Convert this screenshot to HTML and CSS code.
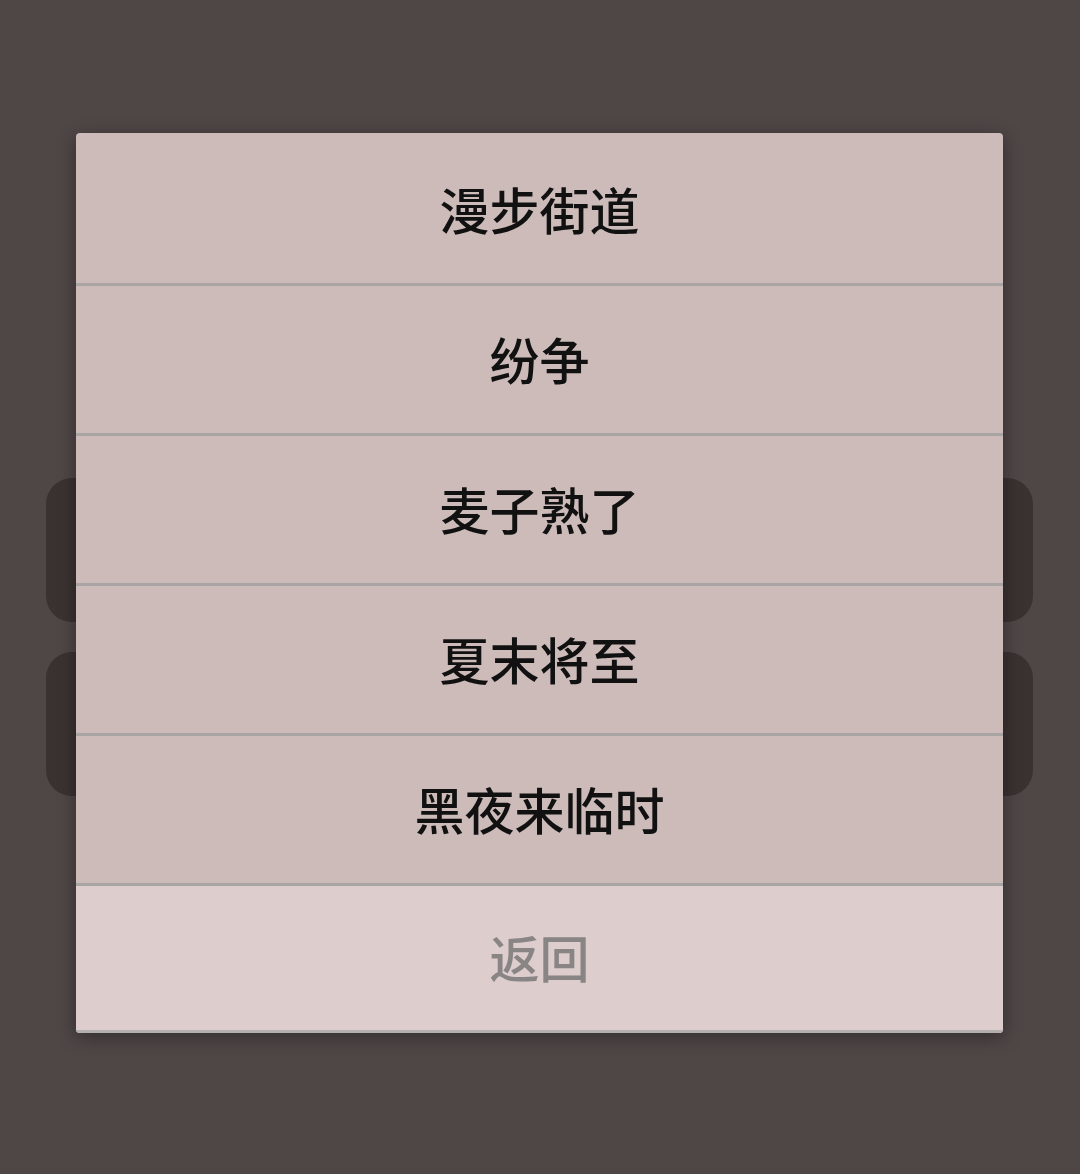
FILE: index.html
```html
<!DOCTYPE html>
<html lang="zh">
<head>
<meta charset="utf-8">
<link rel="stylesheet" href="styles.css">
</head>
<body>
<div class="page">
  <div class="bg-card"></div>
  <div class="bg-card"></div>
</div>
<div class="dialog">
  <div class="item">漫步街道</div>
  <div class="item">纷争</div>
  <div class="item">麦子熟了</div>
  <div class="item">夏末将至</div>
  <div class="item">黑夜来临时</div>
  <div class="item back">返回</div>
</div>
</body>
</html>
```
FILE: styles.css
```css
html, body {
  margin: 0;
  padding: 0;
}
body {
  width: 1080px;
  height: 1174px;
  background: #4f4646;
  font-family: "Noto Sans CJK SC", "Noto Sans", sans-serif;
  position: relative;
  overflow: hidden;
}
.page {
  padding: 478px 47px 0 46px;
  display: flex;
  flex-direction: column;
  gap: 30px;
}
.bg-card {
  height: 144px;
  border-radius: 26px;
  background: #3a3231;
}
.dialog {
  position: absolute;
  left: 76px;
  top: 133px;
  width: 927px;
  padding-top: 3px;
  border-radius: 4px;
  overflow: hidden;
  box-shadow: 0 4px 18px rgba(0,0,0,0.35);
  background: #cdbbba;
}
.item {
  box-sizing: border-box;
  height: 150px;
  padding-bottom: 4px;
  border-bottom: 3px solid #a9a5a5;
  display: flex;
  align-items: center;
  justify-content: center;
  font-size: 50px;
  font-weight: 500;
  color: #111;
}
.item.back {
  background: #ddcdcd;
  color: #8a8585;
  height: 147px;
  border-bottom-color: #b3afaf;
}
```
